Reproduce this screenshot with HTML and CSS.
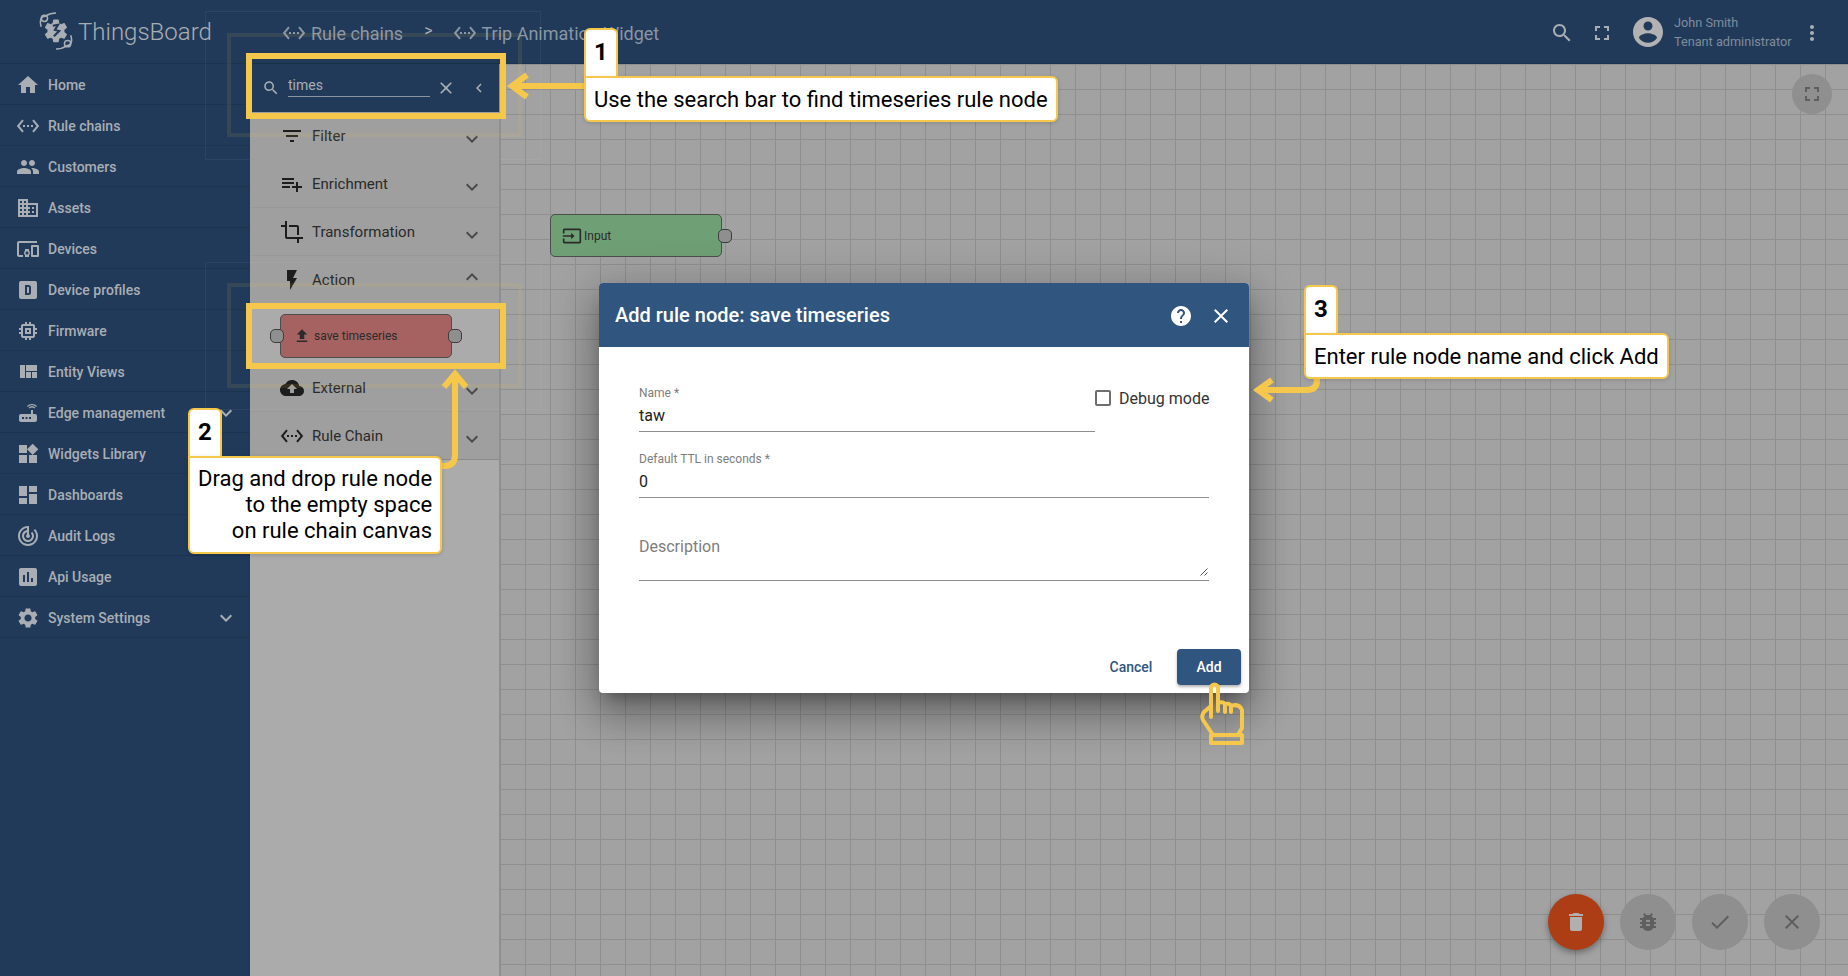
FILE: index.html
```html
<!DOCTYPE html>
<html lang="en">
<head>
    <meta charset="UTF-8">
    <title>ThingsBoard | Rule chain</title>
    <link rel="stylesheet" href="styles.css">
</head>
<body>

<div class="app">
    <header class="toolbar">
        <div class="brand">
            <svg class="logo" viewBox="0 0 36 36">
                <g class="logo-lines">
                    <path d="M4 14C2 8 4 4 8 4c3-2 6-3 10-3"/>
                    <circle cx="7" cy="6" r="3"/>
                    <path d="M32 22c2 6 0 10-4 10-3 2-6 3-10 3"/>
                    <circle cx="29" cy="30" r="3"/>
                </g>
                <path class="logo-cog" transform="translate(4.5 4.5) scale(1.12)" d="M19.14 12.94c.04-.3.06-.61.06-.94 0-.32-.02-.64-.07-.94l2.03-1.58c.18-.14.23-.41.12-.61l-1.92-3.32c-.12-.22-.37-.29-.59-.22l-2.39.96c-.5-.38-1.03-.7-1.62-.94l-.36-2.54c-.04-.24-.24-.41-.48-.41h-3.84c-.24 0-.43.17-.47.41l-.36 2.54c-.59.24-1.13.57-1.62.94l-2.39-.96c-.22-.08-.47 0-.59.22L2.74 8.87c-.12.21-.08.47.12.61l2.03 1.58c-.05.3-.09.63-.09.94s.02.64.07.94l-2.03 1.58c-.18.14-.23.41-.12.61l1.92 3.32c.12.22.37.29.59.22l2.39-.96c.5.38 1.03.7 1.62.94l.36 2.54c.05.24.24.41.48.41h3.84c.24 0 .44-.17.47-.41l.36-2.54c.59-.24 1.13-.56 1.62-.94l2.39.96c.22.08.47 0 .59-.22l1.92-3.32c.12-.22.07-.47-.12-.61l-2.01-1.58z"/>
                <path class="logo-mark" d="M15 13l5-1-3 5 4 1-5 5"/>
            </svg>
            <span class="brand-name">ThingsBoard</span>
        </div>
        <nav class="crumbs">
            <svg class="ico" viewBox="0 0 24 24"><path d="M7.77 6.76L6.23 5.48.82 12l5.41 6.52 1.54-1.28L3.42 12l4.35-5.24zM7 13h2v-2H7v2zm10-2h-2v2h2v-2zm-6 2h2v-2h-2v2zm6.77-7.52l-1.54 1.28L20.58 12l-4.35 5.24 1.54 1.28L23.18 12l-5.41-6.52z"/></svg>
            <span class="crumb-text">Rule chains</span>
            <span class="crumb-sep">&gt;</span>
            <svg class="ico" viewBox="0 0 24 24"><path d="M7.77 6.76L6.23 5.48.82 12l5.41 6.52 1.54-1.28L3.42 12l4.35-5.24zM7 13h2v-2H7v2zm10-2h-2v2h2v-2zm-6 2h2v-2h-2v2zm6.77-7.52l-1.54 1.28L20.58 12l-4.35 5.24 1.54 1.28L23.18 12l-5.41-6.52z"/></svg>
            <span class="crumb-text">Trip Animation Widget</span>
        </nav>
        <div class="user-area">
            <svg class="ico" viewBox="0 0 24 24"><path d="M15.5 14h-.79l-.28-.27C15.41 12.59 16 11.11 16 9.5 16 5.91 13.09 3 9.5 3S3 5.91 3 9.5 5.91 16 9.5 16c1.61 0 3.09-.59 4.23-1.57l.27.28v.79l5 4.99L20.49 19l-4.99-5zm-6 0C7.01 14 5 11.99 5 9.5S7.01 5 9.5 5 14 7.01 14 9.5 11.99 14 9.5 14z"/></svg>
            <svg class="ico" viewBox="0 0 24 24"><path d="M7 14H5v5h5v-2H7v-3zm-2-4h2V7h3V5H5v5zm12 7h-3v2h5v-5h-2v3zM14 5v2h3v3h2V5h-5z"/></svg>
            <svg class="avatar" viewBox="2 2 20 20"><path d="M12 2C6.48 2 2 6.48 2 12s4.48 10 10 10 10-4.48 10-10S17.52 2 12 2zm0 3c1.66 0 3 1.34 3 3s-1.34 3-3 3-3-1.34-3-3 1.34-3 3-3zm0 14.2c-2.5 0-4.71-1.28-6-3.22.03-1.99 4-3.08 6-3.08 1.99 0 5.97 1.09 6 3.08-1.29 1.94-3.5 3.22-6 3.22z"/></svg>
            <div class="user-info">
                <span>John Smith</span>
                <span>Tenant administrator</span>
            </div>
            <svg class="ico" viewBox="0 0 24 24"><path d="M12 8c1.1 0 2-.9 2-2s-.9-2-2-2-2 .9-2 2 .9 2 2 2zm0 2c-1.1 0-2 .9-2 2s.9 2 2 2 2-.9 2-2-.9-2-2-2zm0 6c-1.1 0-2 .9-2 2s.9 2 2 2 2-.9 2-2-.9-2-2-2z"/></svg>
        </div>
    </header>

    <aside class="sidebar">
        <a class="side-item"><svg class="ico" viewBox="0 0 24 24"><path d="M10 20v-6h4v6h5v-8h3L12 3 2 12h3v8z"/></svg>Home</a>
        <a class="side-item"><svg class="ico" viewBox="0 0 24 24"><path d="M7.77 6.76L6.23 5.48.82 12l5.41 6.52 1.54-1.28L3.42 12l4.35-5.24zM7 13h2v-2H7v2zm10-2h-2v2h2v-2zm-6 2h2v-2h-2v2zm6.77-7.52l-1.54 1.28L20.58 12l-4.35 5.24 1.54 1.28L23.18 12l-5.41-6.52z"/></svg>Rule chains</a>
        <a class="side-item"><svg class="ico" viewBox="0 0 24 24"><path d="M16 11c1.66 0 2.99-1.34 2.99-3S17.66 5 16 5c-1.66 0-3 1.34-3 3s1.34 3 3 3zm-8 0c1.66 0 2.99-1.34 2.99-3S9.66 5 8 5C6.34 5 5 6.34 5 8s1.34 3 3 3zm0 2c-2.33 0-7 1.17-7 3.5V19h14v-2.5c0-2.33-4.67-3.5-7-3.5zm8 0c-.29 0-.62.02-.97.05 1.16.84 1.97 1.97 1.97 3.45V19h6v-2.5c0-2.33-4.67-3.5-7-3.5z"/></svg>Customers</a>
        <a class="side-item"><svg class="ico" viewBox="0 0 24 24"><path d="M12 7V3H2v18h20V7H12zM6 19H4v-2h2v2zm0-4H4v-2h2v2zm0-4H4V9h2v2zm0-4H4V5h2v2zm4 12H8v-2h2v2zm0-4H8v-2h2v2zm0-4H8V9h2v2zm0-4H8V5h2v2zm10 12h-8v-2h2v-2h-2v-2h2v-2h-2V9h8v10zm-2-8h-2v2h2v-2zm0 4h-2v2h2v-2z"/></svg>Assets</a>
        <a class="side-item"><svg class="ico" viewBox="0 0 24 24"><path d="M3 6h18V4H3c-1.1 0-2 .9-2 2v12c0 1.1.9 2 2 2h4v-2H3V6zm10 6H9v1.78c-.61.55-1 1.33-1 2.22s.39 1.67 1 2.22V20h4v-1.78c.61-.55 1-1.34 1-2.22s-.39-1.67-1-2.22V12zm-2 5.5c-.83 0-1.5-.67-1.5-1.5s.67-1.5 1.5-1.5 1.5.67 1.5 1.5-.67 1.5-1.5 1.5zM22 8h-6c-.5 0-1 .5-1 1v10c0 .5.5 1 1 1h6c.5 0 1-.5 1-1V9c0-.5-.5-1-1-1zm-1 10h-4v-8h4v8z"/></svg>Devices</a>
        <a class="side-item"><svg class="ico" viewBox="0 0 24 24"><path fill-rule="evenodd" d="M5 3h14a2 2 0 0 1 2 2v14a2 2 0 0 1-2 2H5a2 2 0 0 1-2-2V5a2 2 0 0 1 2-2zM9 7v10h3.5a2.5 2.5 0 0 0 2.5-2.5v-5A2.5 2.5 0 0 0 12.5 7zm2 2h1.5a.5.5 0 0 1 .5.5v5a.5.5 0 0 1-.5.5H11z"/></svg>Device profiles</a>
        <a class="side-item"><svg class="ico" viewBox="0 0 24 24"><path d="M15 9H9v6h6V9zm-2 4h-2v-2h2v2zm8-2V9h-2V7c0-1.1-.9-2-2-2h-2V3h-2v2h-2V3H9v2H7c-1.1 0-2 .9-2 2v2H3v2h2v2H3v2h2v2c0 1.1.9 2 2 2h2v2h2v-2h2v2h2v-2h2c1.1 0 2-.9 2-2v-2h2v-2h-2v-2h2zm-4 6H7V7h10v10z"/></svg>Firmware</a>
        <a class="side-item"><svg class="ico" viewBox="0 0 24 24"><path d="M10 18h5v-6h-5v6zm-6 0h5V5H4v13zm12 0h5v-6h-5v6zM10 5v6h11V5H10z"/></svg>Entity Views</a>
        <a class="side-item"><svg class="ico" viewBox="0 0 24 24"><path d="M20.2 5.9l.8-.8C19.6 3.7 17.8 3 16 3s-3.6.7-5 2.1l.8.8C13 4.8 14.5 4.2 16 4.2s3 .6 4.2 1.7zm-.9.8c-.9-.9-2.1-1.4-3.3-1.4s-2.4.5-3.3 1.4l.8.8c.7-.7 1.6-1 2.5-1 .9 0 1.8.3 2.5 1l.8-.8zM19 13h-2V9h-2v4H5c-1.1 0-2 .9-2 2v4c0 1.1.9 2 2 2h14c1.1 0 2-.9 2-2v-4c0-1.1-.9-2-2-2zM8 18H6v-2h2v2zm3.5 0h-2v-2h2v2zm3.5 0h-2v-2h2v2z"/></svg>Edge management<svg class="ico side-chevron" viewBox="0 0 24 24"><path d="M16.59 8.59L12 13.17 7.41 8.59 6 10l6 6 6-6z"/></svg></a>
        <a class="side-item"><svg class="ico" viewBox="0 0 24 24"><path d="M13 13v8h8v-8h-8zM3 21h8v-8H3v8zM3 3v8h8V3H3zm13.66-1.31L11 7.34 16.66 13l5.66-5.66-5.66-5.65z"/></svg>Widgets Library</a>
        <a class="side-item"><svg class="ico" viewBox="0 0 24 24"><path d="M3 13h8V3H3v10zm0 8h8v-6H3v6zm10 0h8V11h-8v10zm0-18v6h8V3h-8z"/></svg>Dashboards</a>
        <a class="side-item"><svg class="ico" viewBox="0 0 24 24"><path d="M19.07 4.93l-1.41 1.41C19.1 7.79 20 9.79 20 12c0 4.42-3.58 8-8 8s-8-3.58-8-8c0-4.08 3.05-7.44 7-7.93v2.02C8.16 6.57 6 9.03 6 12c0 3.31 2.69 6 6 6s6-2.69 6-6c0-1.66-.67-3.16-1.76-4.24l-1.41 1.41C15.55 9.9 16 10.9 16 12c0 2.21-1.79 4-4 4s-4-1.79-4-4c0-1.86 1.28-3.41 3-3.86v2.14c-.6.35-1 .98-1 1.72 0 1.1.9 2 2 2s2-.9 2-2c0-.74-.4-1.38-1-1.72V2h-1C6.48 2 2 6.48 2 12s4.48 10 10 10 10-4.48 10-10c0-2.76-1.12-5.26-2.93-7.07z"/></svg>Audit Logs</a>
        <a class="side-item"><svg class="ico" viewBox="0 0 24 24"><path d="M19 3H5c-1.1 0-2 .9-2 2v14c0 1.1.9 2 2 2h14c1.1 0 2-.9 2-2V5c0-1.1-.9-2-2-2zM9 17H7v-7h2v7zm4 0h-2V7h2v10zm4 0h-2v-4h2v4z"/></svg>Api Usage</a>
        <a class="side-item"><svg class="ico" viewBox="0 0 24 24"><path d="M19.14 12.94c.04-.3.06-.61.06-.94 0-.32-.02-.64-.07-.94l2.03-1.58c.18-.14.23-.41.12-.61l-1.92-3.32c-.12-.22-.37-.29-.59-.22l-2.39.96c-.5-.38-1.03-.7-1.62-.94l-.36-2.54c-.04-.24-.24-.41-.48-.41h-3.84c-.24 0-.43.17-.47.41l-.36 2.54c-.59.24-1.13.57-1.62.94l-2.39-.96c-.22-.08-.47 0-.59.22L2.74 8.87c-.12.21-.08.47.12.61l2.03 1.58c-.05.3-.09.63-.09.94s.02.64.07.94l-2.03 1.58c-.18.14-.23.41-.12.61l1.92 3.32c.12.22.37.29.59.22l2.39-.96c.5.38 1.03.7 1.62.94l.36 2.54c.05.24.24.41.48.41h3.84c.24 0 .44-.17.47-.41l.36-2.54c.59-.24 1.13-.56 1.62-.94l2.39.96c.22.08.47 0 .59-.22l1.92-3.32c.12-.22.07-.47-.12-.61l-2.01-1.58zM12 15.6c-1.98 0-3.6-1.62-3.6-3.6s1.62-3.6 3.6-3.6 3.6 1.62 3.6 3.6-1.62 3.6-3.6 3.6z"/></svg>System Settings<svg class="ico side-chevron" viewBox="0 0 24 24"><path d="M16.59 8.59L12 13.17 7.41 8.59 6 10l6 6 6-6z"/></svg></a>
    </aside>

    <section class="library">
        <div class="lib-search">
            <svg class="ico ico-18" viewBox="0 0 24 24"><path d="M15.5 14h-.79l-.28-.27C15.41 12.59 16 11.11 16 9.5 16 5.91 13.09 3 9.5 3S3 5.91 3 9.5 5.91 16 9.5 16c1.61 0 3.09-.59 4.23-1.57l.27.28v.79l5 4.99L20.49 19l-4.99-5zm-6 0C7.01 14 5 11.99 5 9.5S7.01 5 9.5 5 14 7.01 14 9.5 11.99 14 9.5 14z"/></svg>
            <div class="lib-query">times</div>
            <svg class="ico lib-clear" viewBox="0 0 24 24"><path d="M19 6.41L17.59 5 12 10.59 6.41 5 5 6.41 10.59 12 5 17.59 6.41 19 12 13.41 17.59 19 19 17.59 13.41 12z"/></svg>
            <svg class="ico ico-18 lib-back" viewBox="0 0 24 24"><path d="M15.41 7.41L14 6l-6 6 6 6 1.41-1.41L10.83 12z"/></svg>
        </div>
        <div class="lib-row"><svg class="ico" viewBox="0 0 24 24"><path d="M10 18h4v-2h-4v2zM3 6v2h18V6H3zm3 7h12v-2H6v2z"/></svg><span>Filter</span><svg class="ico lib-chevron" viewBox="0 0 24 24"><path d="M16.59 8.59L12 13.17 7.41 8.59 6 10l6 6 6-6z"/></svg></div>
        <div class="lib-row"><svg class="ico" viewBox="0 0 24 24"><path d="M14 10H2v2h12v-2zm0-4H2v2h12V6zm4 8v-4h-2v4h-4v2h4v4h2v-4h4v-2h-4zM2 16h8v-2H2v2z"/></svg><span>Enrichment</span><svg class="ico lib-chevron" viewBox="0 0 24 24"><path d="M16.59 8.59L12 13.17 7.41 8.59 6 10l6 6 6-6z"/></svg></div>
        <div class="lib-row"><svg class="ico" viewBox="0 0 24 24"><path d="M17 15h2V7c0-1.1-.9-2-2-2H9v2h8v8zM7 17V1H5v4H1v2h4v10c0 1.1.9 2 2 2h10v4h2v-4h4v-2H7z"/></svg><span>Transformation</span><svg class="ico lib-chevron" viewBox="0 0 24 24"><path d="M16.59 8.59L12 13.17 7.41 8.59 6 10l6 6 6-6z"/></svg></div>
        <div class="lib-row"><svg class="ico" viewBox="0 0 24 24"><path d="M7 2v11h3v9l7-12h-4l4-8z"/></svg><span>Action</span><svg class="ico lib-chevron lib-chevron-up" viewBox="0 0 24 24"><path d="M12 8l-6 6 1.41 1.41L12 10.83l4.59 4.58L18 14z"/></svg></div>
        <div class="lib-nodes">
            <div class="rule-node node-action">
                <i class="port port-in"></i>
                <svg class="ico ico-18" viewBox="0 0 24 24"><path d="M9 16h6v-6h4l-7-7-7 7h4v6zm-4 2h14v2H5z"/></svg>
                <span>save timeseries</span>
                <i class="port port-out"></i>
            </div>
        </div>
        <div class="lib-row"><svg class="ico" viewBox="0 0 24 24"><path d="M19.35 10.04C18.67 6.59 15.64 4 12 4 9.11 4 6.6 5.64 5.35 8.04 2.34 8.36 0 10.91 0 14c0 3.31 2.69 6 6 6h13c2.76 0 5-2.24 5-5 0-2.64-2.05-4.78-4.65-4.96zM14 13v4h-4v-4H7l5-5 5 5h-3z"/></svg><span>External</span><svg class="ico lib-chevron" viewBox="0 0 24 24"><path d="M16.59 8.59L12 13.17 7.41 8.59 6 10l6 6 6-6z"/></svg></div>
        <div class="lib-row lib-row-last"><svg class="ico" viewBox="0 0 24 24"><path d="M7.77 6.76L6.23 5.48.82 12l5.41 6.52 1.54-1.28L3.42 12l4.35-5.24zM7 13h2v-2H7v2zm10-2h-2v2h2v-2zm-6 2h2v-2h-2v2zm6.77-7.52l-1.54 1.28L20.58 12l-4.35 5.24 1.54 1.28L23.18 12l-5.41-6.52z"/></svg><span>Rule Chain</span><svg class="ico lib-chevron" viewBox="0 0 24 24"><path d="M16.59 8.59L12 13.17 7.41 8.59 6 10l6 6 6-6z"/></svg></div>
    </section>

    <main class="canvas">
        <div class="rule-node node-input">
            <svg class="ico ico-20" viewBox="0 0 24 24"><path d="M21 3.01H3c-1.1 0-2 .9-2 2V9h2V4.99h18v14.03H3V15H1v4.01c0 1.1.9 1.98 2 1.98h18c1.1 0 2-.88 2-1.98v-14c0-1.11-.9-2-2-2zM11 16l4-4-4-4v3H1v2h10v3z"/></svg>
            <span>Input</span>
            <i class="port port-out"></i>
        </div>
        <button class="fab fab-small canvas-full"><svg class="ico" viewBox="0 0 24 24"><path d="M7 14H5v5h5v-2H7v-3zm-2-4h2V7h3V5H5v5zm12 7h-3v2h5v-5h-2v3zM14 5v2h3v3h2V5h-5z"/></svg></button>
        <div class="fab-row">
            <button class="fab fab-red"><svg class="ico" viewBox="0 0 24 24"><path d="M6 19c0 1.1.9 2 2 2h8c1.1 0 2-.9 2-2V7H6v12zM19 4h-3.5l-1-1h-5l-1 1H5v2h14V4z"/></svg></button>
            <button class="fab"><svg class="ico" viewBox="0 0 24 24"><path d="M20 8h-2.81c-.45-.78-1.07-1.45-1.82-1.96L17 4.41 15.59 3l-2.17 2.17C12.96 5.06 12.49 5 12 5c-.49 0-.96.06-1.41.17L8.41 3 7 4.41l1.62 1.63C7.88 6.55 7.26 7.22 6.81 8H4v2h2.09c-.05.33-.09.66-.09 1v1H4v2h2v1c0 .34.04.67.09 1H4v2h2.81c1.04 1.79 2.97 3 5.19 3s4.15-1.21 5.19-3H20v-2h-2.09c.05-.33.09-.66.09-1v-1h2v-2h-2v-1c0-.34-.04-.67-.09-1H20V8zm-6 8h-4v-2h4v2zm0-4h-4v-2h4v2z"/></svg></button>
            <button class="fab"><svg class="ico" viewBox="0 0 24 24"><path d="M9 16.2L4.8 12l-1.4 1.4L9 19 21 7l-1.4-1.4L9 16.2z"/></svg></button>
            <button class="fab"><svg class="ico" viewBox="0 0 24 24"><path d="M19 6.41L17.59 5 12 10.59 6.41 5 5 6.41 10.59 12 5 17.59 6.41 19 12 13.41 17.59 19 19 17.59 13.41 12z"/></svg></button>
        </div>
    </main>
</div>

<!-- faint outlines left over from the highlight frames -->
<div class="ghost ghost-a1"></div>
<div class="ghost ghost-a2"></div>
<div class="ghost ghost-b1"></div>
<div class="ghost ghost-b2"></div>

<div class="frame frame-search"></div>
<div class="frame frame-node"></div>

<div class="dialog">
    <div class="dialog-head">
        <h2>Add rule node: save timeseries</h2>
        <svg class="ico" viewBox="0 0 24 24"><path d="M12 2C6.48 2 2 6.48 2 12s4.48 10 10 10 10-4.48 10-10S17.52 2 12 2zm1 17h-2v-2h2v2zm2.07-7.75l-.9.92C13.45 12.9 13 13.5 13 15h-2v-.5c0-1.1.45-2.1 1.17-2.83l1.24-1.26c.37-.36.59-.86.59-1.41 0-1.1-.9-2-2-2s-2 .9-2 2H8c0-2.21 1.79-4 4-4s4 1.79 4 4c0 .88-.36 1.68-.93 2.25z"/></svg>
        <svg class="ico dialog-close" viewBox="0 0 24 24"><path d="M19 6.41L17.59 5 12 10.59 6.41 5 5 6.41 10.59 12 5 17.59 6.41 19 12 13.41 17.59 19 19 17.59 13.41 12z"/></svg>
    </div>
    <div class="dialog-body">
        <div class="name-row">
            <div class="field">
                <label>Name *</label>
                <div class="field-value">taw</div>
            </div>
            <div class="debug"><i class="checkbox"></i>Debug mode</div>
        </div>
        <div class="field ttl-field">
            <label>Default TTL in seconds *</label>
            <div class="field-value">0</div>
        </div>
        <div class="field desc-field">
            <div class="field-hint">Description</div>
            <svg class="grip" viewBox="0 0 8 8"><path d="M7.5.5l-7 7M7.5 4.5l-3 3"/></svg>
        </div>
    </div>
    <div class="dialog-foot">
        <button class="btn-text">Cancel</button>
        <button class="btn-main">Add</button>
    </div>
</div>

<svg class="arrows" viewBox="0 0 1848 976">
    <path d="M584 86H513"/>
    <path d="M527 75l-15 11 15 11"/>
    <path d="M442 466h2q11 0 11-11V378"/>
    <path d="M444 387l11-13 11 13"/>
    <path d="M1317 379v1q0 10-10 10h-47"/>
    <path d="M1272 380l-14 10 14 10"/>
    <g class="hand">
        <path d="M1211 717V688a3.5 3.5 0 0 1 7 0v23"/>
        <path d="M1211 706l-7 6q-3 4-1 8l10 15"/>
        <path d="M1218 703q5-2 7 1v8M1225 704q5-1 6 2v6M1231 706q8-3 11 4v18l-4 7"/>
        <path d="M1211 735h31v8h-31z"/>
    </g>
</svg>

<div class="callout callout-one">
    <div class="callout-num">1</div>
    <div class="callout-box">Use the search bar to find timeseries rule node</div>
</div>
<div class="callout callout-two">
    <div class="callout-num">2</div>
    <div class="callout-box">Drag and drop rule node<br>to the empty space<br>on rule chain canvas</div>
</div>
<div class="callout callout-three">
    <div class="callout-num">3</div>
    <div class="callout-box">Enter rule node name and click Add</div>
</div>

</body>
</html>
```

FILE: styles.css
```css
* {
    box-sizing: border-box;
    margin: 0;
    padding: 0;
}
html, body {
    height: 100%;
    overflow: hidden;
}
body {
    font-family: 'Roboto', 'Liberation Sans', sans-serif;
    background-color: #a2a2a2;
    position: relative;
}
button {
    font-family: inherit;
    border: none;
}
.ico {
    width: 24px;
    height: 24px;
    fill: currentColor;
    flex: none;
    display: block;
}
.ico-18 {
    width: 18px;
    height: 18px;
}
.ico-20 {
    width: 20px;
    height: 20px;
}

.app {
    display: grid;
    grid-template-columns: 250px 250px 1fr;
    grid-template-rows: 64px 1fr;
    height: 976px;
}

/* top bar */
.toolbar {
    grid-column: 1 / 4;
    display: flex;
    align-items: center;
    background-color: #213a5a;
    border-bottom: 1px solid #1d3450;
    color: #a9aeb4;
}
.brand {
    width: 250px;
    display: flex;
    align-items: center;
    padding-left: 37px;
    flex: none;
}
.logo {
    width: 38px;
    height: 38px;
    margin-top: -1px;
}
.logo-lines {
    fill: none;
    stroke: #a9aeb4;
    stroke-width: 1.4;
}
.logo-cog {
    fill: #a9aeb4;
}
.logo-mark {
    fill: none;
    stroke: #213a5a;
    stroke-width: 2;
}
.brand-name {
    font-size: 24px;
    font-weight: 300;
    margin-left: 3px;
}
.crumbs {
    display: flex;
    align-items: center;
    color: #8996a5;
    padding-left: 32px;
    font-size: 18px;
    padding-top: 3px;
}
.crumb-text {
    margin-left: 5px;
}
.crumb-sep {
    font-size: 16px;
    color: #a9aeb4;
    margin: -5px 20px 0 21px;
}
.user-area {
    margin-left: auto;
    display: flex;
    align-items: center;
    padding-right: 24px;
}
.user-area > .ico {
    margin-top: 2px;
}
.user-area .ico + .ico {
    margin-left: 16px;
}
.avatar {
    width: 30px;
    height: 30px;
    fill: #b2b2b2;
    margin-left: 19px;
}
.user-info {
    display: flex;
    flex-direction: column;
    margin-left: 11px;
    margin-right: 9px;
    font-size: 12.7px;
    line-height: 19px;
    color: #808c9a;
    width: 117px;
    white-space: nowrap;
}

/* left menu */
.sidebar {
    background-color: #213a5a;
    display: flex;
    flex-direction: column;
    overflow: hidden;
}
.side-item {
    height: 41px;
    flex: none;
    display: flex;
    align-items: center;
    gap: 8px;
    padding: 2px 0 0 16px;
    font-size: 14px;
    font-weight: 500;
    color: #a9aeb4;
    border-bottom: 1px solid #1d3450;
}
.side-chevron {
    margin-left: auto;
    margin-right: 12px;
}

/* node library */
.library {
    background-color: #ababab;
    border-right: 1px solid #8f8f8f;
    box-shadow: 1px 0 3px rgba(0, 0, 0, 0.2);
    position: relative;
}
.lib-search {
    height: 48px;
    background-color: #213a5a;
    color: #a9aeb4;
    display: flex;
    align-items: center;
    padding-left: 12px;
}
.lib-query {
    width: 142px;
    margin-left: 8px;
    font-size: 14px;
    line-height: 24px;
    height: 24px;
    margin-top: -6px;
    border-bottom: 1px solid #8b95a1;
}
.lib-clear {
    width: 20px;
    height: 20px;
    margin-left: 6px;
}
.lib-back {
    margin-left: 14px;
}
.lib-row {
    height: 48px;
    display: flex;
    align-items: center;
    gap: 8px;
    padding: 0 15px 0 30px;
    background-color: #9f9f9f;
    border-bottom: 1px solid #999;
    font-size: 15px;
    color: #2a2a2a;
}
.lib-row > .ico:first-child {
    color: #1d1d1d;
}
.lib-row-last {
    border-bottom: 1px solid #8a8a8a;
}
.lib-chevron {
    margin-left: auto;
    color: #4a4a4a;
    margin-top: 6px;
}
.lib-chevron-up {
    margin-top: 0;
    margin-bottom: 6px;
}
.lib-nodes {
    height: 60px;
    background-color: #ababab;
    position: relative;
}

/* rule nodes */
.rule-node {
    position: absolute;
    display: flex;
    align-items: center;
    border: 1px solid #4d4d4d;
    border-radius: 5px;
    font-size: 12px;
    color: #2b2b2b;
}
.node-action {
    left: 30px;
    top: 10px;
    width: 172px;
    height: 44px;
    padding-left: 12px;
    gap: 3px;
    background-color: #a56261;
}
.node-input {
    left: 50px;
    top: 150px;
    width: 172px;
    height: 43px;
    padding-left: 11px;
    gap: 2px;
    background-color: #6f9f75;
}
.port {
    position: absolute;
    top: 14px;
    width: 14px;
    height: 14px;
    background-color: #8f8f8f;
    border: 1px solid #3c3c3c;
    border-radius: 5px;
}
.port-in {
    left: -11px;
}
.port-out {
    right: -11px;
}

/* canvas with the grid */
.canvas {
    position: relative;
    background-color: #a2a2a2;
    background-image:
        linear-gradient(to right, #8f8f8f 1px, transparent 1px),
        linear-gradient(to bottom, #8f8f8f 1px, transparent 1px);
    background-size: 25px 25px;
}
.fab {
    width: 56px;
    height: 56px;
    border-radius: 50%;
    background-color: #8f8f8f;
    color: #5f5f5f;
    display: flex;
    align-items: center;
    justify-content: center;
}
.fab-small {
    width: 40px;
    height: 40px;
}
.fab-red {
    background-color: #ad3d14;
    color: #b0b0b0;
    box-shadow: 0 3px 6px rgba(0, 0, 0, 0.35);
}
.canvas-full {
    position: absolute;
    top: 10px;
    right: 16px;
}
.fab-row {
    position: absolute;
    right: 28px;
    bottom: 26px;
    display: flex;
    gap: 16px;
}

/* highlight frames */
.frame {
    position: absolute;
    left: 246px;
    width: 260px;
    height: 66px;
    border: 6px solid #f5c84b;
}
.frame-search {
    top: 53px;
}
.frame-node {
    top: 303px;
}
.ghost {
    position: absolute;
    pointer-events: none;
}
.ghost-a1, .ghost-b1 {
    left: 205px;
    width: 336px;
    border: 1px solid rgba(255, 255, 255, 0.05);
}
.ghost-a2, .ghost-b2 {
    left: 227px;
    width: 295px;
    border: 4px solid rgba(245, 200, 75, 0.1);
}
.ghost-a1 {
    top: 11px;
    height: 149px;
}
.ghost-a2 {
    top: 33px;
    height: 104px;
}
.ghost-b1 {
    top: 262px;
    height: 148px;
}
.ghost-b2 {
    top: 283px;
    height: 105px;
}

/* add node dialog */
.dialog {
    position: absolute;
    left: 599px;
    top: 283px;
    width: 650px;
    height: 410px;
    background-color: white;
    border-radius: 4px;
    box-shadow: 0 11px 15px -7px rgba(0, 0, 0, 0.3), 0 24px 38px 3px rgba(0, 0, 0, 0.2), 0 9px 46px 8px rgba(0, 0, 0, 0.18);
    display: flex;
    flex-direction: column;
    overflow: hidden;
}
.dialog-head {
    height: 64px;
    flex: none;
    background-color: #30557f;
    color: white;
    display: flex;
    align-items: center;
    padding: 2px 16px 0;
}
.dialog-head h2 {
    font-size: 20px;
    font-weight: 500;
    margin: -2px auto 0 0;
}
.dialog-close {
    margin-left: 16px;
}
.dialog-body {
    padding: 39px 40px 0;
}
.name-row {
    display: flex;
}
.name-row .field {
    flex: 1;
}
.field {
    border-bottom: 1px solid #8e8e8e;
    padding-bottom: 5px;
    position: relative;
}
.field label {
    display: block;
    font-size: 12px;
    line-height: 14px;
    color: #7d7d7d;
    margin-bottom: 6px;
}
.field-value {
    font-size: 16px;
    line-height: 20px;
    color: #212121;
}
.debug {
    display: flex;
    align-items: center;
    width: 114px;
    height: 24px;
    font-size: 16px;
    color: #333;
    gap: 8px;
    white-space: nowrap;
}
.checkbox {
    width: 16px;
    height: 16px;
    border: 2px solid #6f6f6f;
    border-radius: 2px;
    flex: none;
}
.ttl-field {
    margin-top: 20px;
}
.desc-field {
    margin-top: 39px;
    height: 44px;
}
.field-hint {
    font-size: 16px;
    line-height: 20px;
    color: #7d7d7d;
}
.grip {
    position: absolute;
    right: 1px;
    bottom: 4px;
    width: 8px;
    height: 8px;
    fill: none;
    stroke: #555;
    stroke-width: 1;
}
.dialog-foot {
    margin-top: auto;
    padding: 0 8px 8px 0;
    display: flex;
    justify-content: flex-end;
    gap: 14px;
}
.btn-text, .btn-main {
    width: 64px;
    height: 36px;
    border-radius: 4px;
    font-size: 14px;
    font-weight: 500;
}
.btn-text {
    background: none;
    color: #30557f;
}
.btn-main {
    background-color: #30557f;
    color: white;
    box-shadow: 0 2px 3px rgba(0, 0, 0, 0.3);
}

/* arrows and callouts */
.arrows {
    position: absolute;
    left: 0;
    top: 0;
    width: 1848px;
    height: 976px;
    fill: none;
    stroke: #f5c84b;
    stroke-width: 6;
}
.hand {
    stroke-width: 4;
    stroke-linejoin: round;
    stroke-linecap: round;
}
.callout {
    position: absolute;
    color: black;
}
.callout-one {
    left: 584px;
    top: 28px;
}
.callout-two {
    left: 188px;
    top: 408px;
}
.callout-three {
    left: 1304px;
    top: 285px;
}
.callout-num {
    width: 34px;
    height: 48px;
    background-color: white;
    border: 2px solid #f5c84b;
    border-bottom: none;
    border-radius: 6px 6px 0 0;
    font-size: 24px;
    font-weight: 700;
    padding-bottom: 2px;
    display: flex;
    align-items: center;
    justify-content: center;
}
.callout-box {
    background-color: white;
    border: 2px solid #f5c84b;
    border-radius: 0 6px 6px 6px;
    padding: 9px 8px 7px 8px;
    font-size: 22px;
    line-height: 26px;
    white-space: nowrap;
    box-shadow: 0 1px 4px rgba(0, 0, 0, 0.15);
}
.callout-two .callout-box {
    text-align: right;
    padding: 8px 8px 8px 8px;
}
```
